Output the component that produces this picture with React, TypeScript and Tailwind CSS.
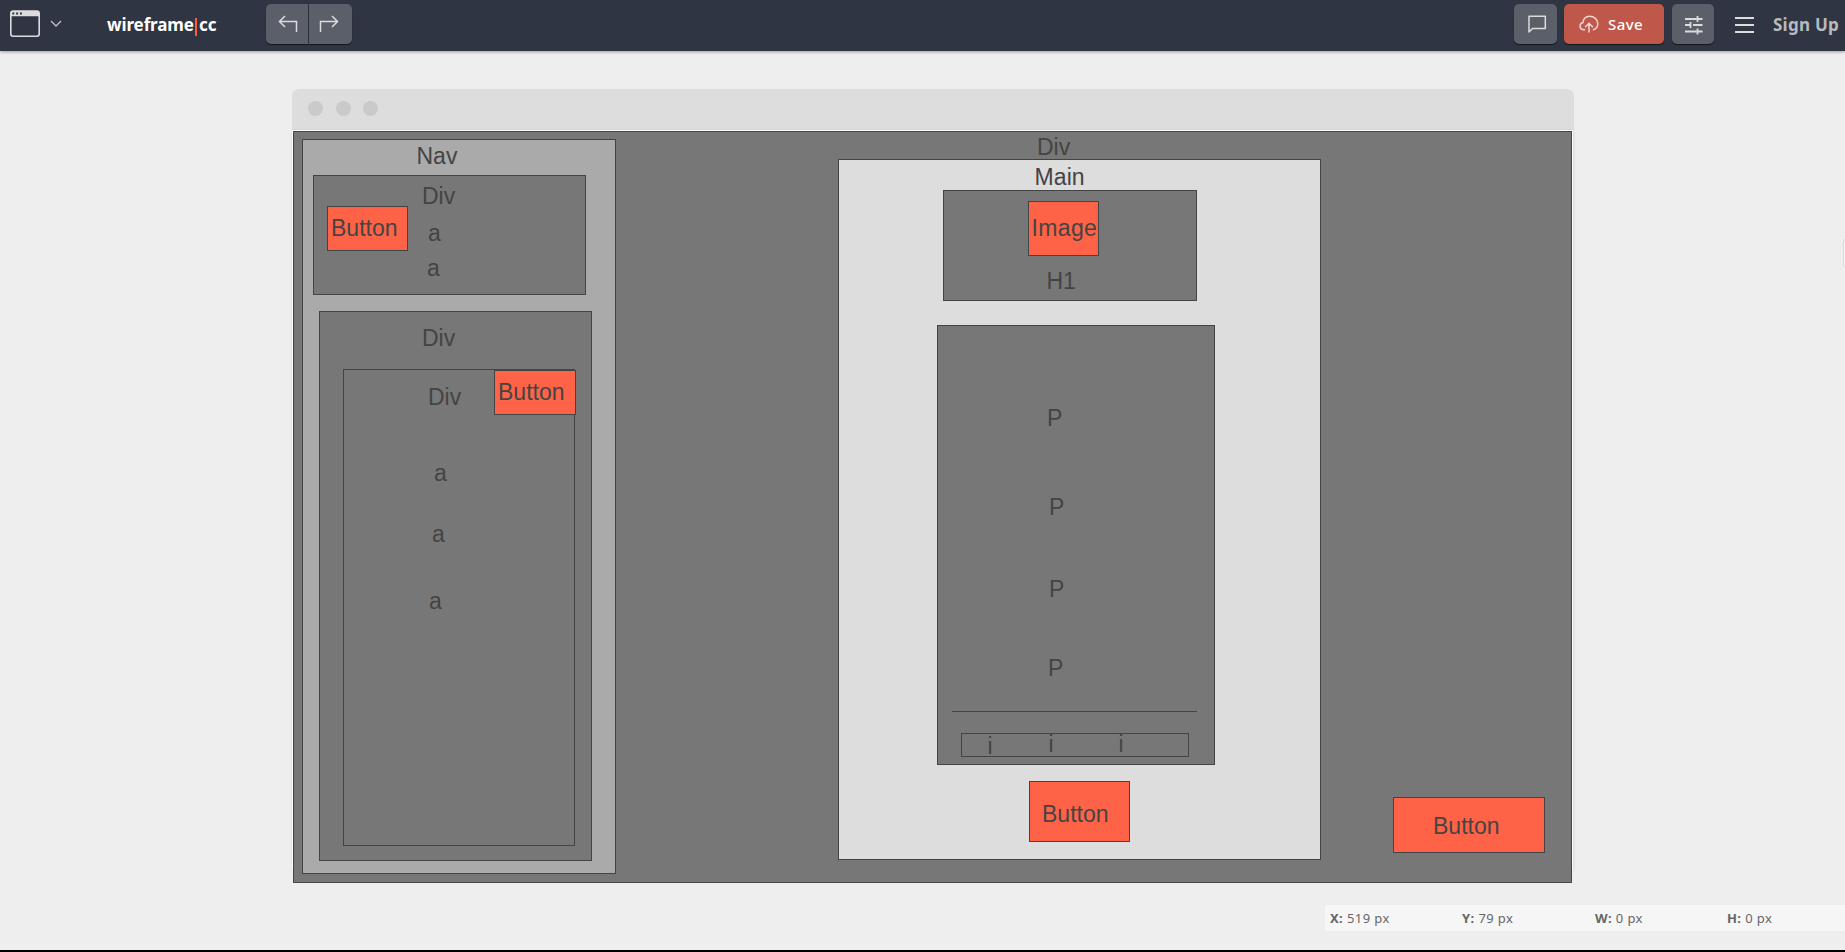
import React from "react";

const boxes: string[] = [
  "left-[1px] top-[1px] w-[1279px] h-[752px] border bg-[#777777]",
  "left-[10px] top-[9px] w-[314px] h-[735px] border bg-[#aaaaaa]",
  "left-[21px] top-[45px] w-[273px] h-[120px] border bg-[#777777]",
  "left-[35px] top-[76px] w-[81px] h-[45px] border bg-[#ff6347]",
  "left-[27px] top-[181px] w-[273px] h-[550px] border bg-[#777777]",
  "left-[51px] top-[239px] w-[232px] h-[477px] border bg-[#777777]",
  "left-[202px] top-[240px] w-[82px] h-[45px] border bg-[#ff6347]",
  "left-[546px] top-[29px] w-[483px] h-[701px] border bg-[#dddddd]",
  "left-[651px] top-[60px] w-[254px] h-[111px] border bg-[#777777]",
  "left-[736px] top-[71px] w-[71px] h-[55px] border bg-[#ff6347]",
  "left-[645px] top-[195px] w-[278px] h-[440px] border bg-[#777777]",
  "left-[660px] top-[581px] w-[245px] border-t",
  "left-[669px] top-[603px] w-[228px] h-[24px] border",
  "left-[737px] top-[651px] w-[101px] h-[61px] border bg-[#ff6347]",
  "left-[1101px] top-[667px] w-[152px] h-[56px] border bg-[#ff6347]",
];

const labels: { text: string; at: string }[] = [
  { text: "Nav", at: "left-[124.500px] top-[15px]" },
  { text: "Div", at: "left-[130px] top-[55px]" },
  { text: "Button", at: "left-[39px] top-[87px]" },
  { text: "a", at: "left-[136px] top-[92px]" },
  { text: "a", at: "left-[135px] top-[127px]" },
  { text: "Div", at: "left-[130px] top-[197px]" },
  { text: "Div", at: "left-[136px] top-[256px]" },
  { text: "Button", at: "left-[206px] top-[251px]" },
  { text: "a", at: "left-[142px] top-[332px]" },
  { text: "a", at: "left-[140px] top-[393px]" },
  { text: "a", at: "left-[137px] top-[460px]" },
  { text: "Div", at: "left-[745px] top-[6px]" },
  { text: "Main", at: "left-[742.500px] top-[36px] tracking-[0.1px]" },
  { text: "Image", at: "left-[739.500px] top-[87px] tracking-[0.350px]" },
  { text: "H1", at: "left-[754.500px] top-[140px]" },
  { text: "P", at: "left-[755px] top-[277px]" },
  { text: "P", at: "left-[757px] top-[366px]" },
  { text: "P", at: "left-[757px] top-[448px]" },
  { text: "P", at: "left-[756px] top-[527px]" },
  { text: "i", at: "left-[695.500px] top-[605px]" },
  { text: "i", at: "left-[756.500px] top-[603px]" },
  { text: "i", at: "left-[826.500px] top-[603px]" },
  { text: "Button", at: "left-[750px] top-[673px]" },
  { text: "Button", at: "left-[1141px] top-[685px]" },
];

const readings = [
  ["X:", "519 px"],
  ["Y:", "79 px"],
  ["W:", "0 px"],
  ["H:", "0 px"],
];

const toolButton =
  "flex h-10 items-center justify-center bg-[#5b5f69] text-[#dcdcdc] shadow-[0_1px_1px_#14161b]";

function WindowIcon() {
  return (
    <svg width="30" height="28" viewBox="0 0 30 28" fill="none">
      <rect x="0.8" y="1" width="28.4" height="25.3" rx="2.5" stroke="#dcdcde" strokeWidth="1.6" />
      <path d="M0.800 6.200V3.200Q0.800 1 3.200 1H26.800Q29.200 1 29.200 3.200V6.200Z" fill="#dcdcde" />
      <path d="M2.300 3.500h2M6.100 3.500h2M9.900 3.500h2" stroke="#2f3542" strokeWidth="2" />
    </svg>
  );
}

function Header() {
  return (
    <header className="relative z-10 flex h-[51px] shrink-0 items-start bg-[#2f3542] shadow-[0_1px_3px_rgba(0,0,0,0.350)]">
      <div className="ml-[10px] mt-[10px] flex items-center">
        <WindowIcon />
        <svg className="ml-[10px]" width="12" height="8" viewBox="0 0 12 8" fill="none" stroke="#c4c5c8" strokeWidth="1.3">
          <path d="M1 1l5 5 5-5" />
        </svg>
      </div>
      <div className="ml-[45px] mt-[13px] flex h-6 w-[114px] items-center whitespace-nowrap text-[17px] font-bold leading-6 text-white">
        <span className="w-[88px] shrink-0 tracking-[-0.100px]">wireframe</span>
        <span className="mr-[2px] mt-[3px] h-[18px] w-[2px] shrink-0 bg-[#ff5a3c]" />
        <span>cc</span>
      </div>
      <div className="ml-[45px] mt-1 flex gap-px">
        <button className={toolButton + " w-[42px] rounded-l-[5px] pl-[2px]"}>
          <svg width="20" height="18" viewBox="0 0 20 18" fill="none" stroke="currentColor" strokeWidth="1.5">
            <path d="M18.500 17V6.500H1.500M7 1L1.500 6.500 7 12" />
          </svg>
        </button>
        <button className={toolButton + " w-[43px] rounded-r-[5px] pr-[3px]"}>
          <svg width="20" height="18" viewBox="0 0 20 18" fill="none" stroke="currentColor" strokeWidth="1.5">
            <path d="M1.500 17V6.500h17M13 1l5.500 5.500L13 12" />
          </svg>
        </button>
      </div>
      <div className="ml-auto mt-1 flex items-center">
        <button className={toolButton + " w-[43px] rounded-[5px] pl-[2px]"}>
          <svg width="20" height="18" viewBox="0 0 20 18" fill="none" stroke="currentColor" strokeWidth="1.5">
            <path d="M2 1.200h16.300v12.300H5.500L2 17z" strokeLinejoin="round" />
          </svg>
        </button>
        <button className="ml-[7px] flex h-10 w-[100px] items-center rounded-[5px] bg-[#bf584a] pl-[15px] text-white shadow-[0_1px_1px_#14161b]">
          <svg width="20" height="18" viewBox="0 0 20 18" fill="none" stroke="#eed6d2" strokeWidth="1.5" strokeLinecap="round">
            <path d="M5.500 14.800C2.800 14.800 1 13.200 1 11c0-2 1.300-3.300 3.100-3.600C4.100 4 6.700 1.200 10.500 1.200c4.500 0 8.300 3.300 8.300 7.500 0 2.600-1.700 5-4.300 6.100M10 17V8.500M6.500 11.800L10 8.300l3.500 3.500" />
          </svg>
          <span className="ml-[9px] text-[15px] font-medium leading-5 tracking-[0.400px]">Save</span>
        </button>
        <button className={toolButton + " ml-2 w-[42px] rounded-[5px] pl-[2px] pt-px"}>
          <svg width="18" height="20" viewBox="0 0 18 20" fill="none" stroke="currentColor" strokeWidth="1.8">
            <path d="M0 4h11.500M12.500 1v6M12.500 4H17.500M0 10h5M5.500 7v6M8 10h9.500M0 16.500h11.500M12.500 13.500v6M12.500 16.500H17.500" />
          </svg>
        </button>
        <div className="ml-[21px] mt-px flex w-[19px] flex-col gap-[5px]">
          <span className="h-[2px] bg-[#dcdcde]" />
          <span className="h-[2px] bg-[#dcdcde]" />
          <span className="h-[2px] bg-[#dcdcde]" />
        </div>
        <span className="ml-[19px] mt-px w-[72px] whitespace-nowrap text-[17px] font-bold leading-6 tracking-[0.250px] text-[#b9babd]">Sign Up</span>
      </div>
    </header>
  );
}

export default function App() {
  return (
    <div className="relative flex h-[952px] w-[1845px] flex-col overflow-hidden border-b-2 border-black bg-[#eeeeee] font-['Noto_Sans',sans-serif]">
      <Header />
      <main className="ml-[292px] mt-[38px] w-[1282px]">
        <div className="flex h-[41px] items-center rounded-t-[7px] bg-[#dddddd] pl-4">
          <span className="-mt-[2px] size-[15px] rounded-full bg-[#cacaca]" />
          <span className="-mt-[2px] ml-[13px] size-[15px] rounded-full bg-[#cacaca]" />
          <span className="-mt-[2px] ml-[12px] size-[15px] rounded-full bg-[#cacaca]" />
        </div>
        <div className="relative h-[740px] border-r border-[#e0e0e0] bg-white font-['Liberation_Sans',sans-serif] shadow-[0_0_2px_rgba(0,0,0,0.100)]">
          {boxes.map((box) => (
            <div key={box} className={"absolute border-[#444444] " + box} />
          ))}
          {labels.map((label) => (
            <span key={label.at} className={"absolute whitespace-nowrap text-[23px] leading-[23px] text-[#444444] " + label.at}>
              {label.text}
            </span>
          ))}
        </div>
      </main>
      <footer className="ml-auto mt-[35px] grid h-[26px] w-[520px] shrink-0 grid-cols-[132px_133px_132px_1fr] items-center bg-[#f6f6f6] pl-[5px] pt-px text-[13px] tracking-[0.400px] text-[#666666]">
        {readings.map(([name, value]) => (
          <span key={name}>
            <b>{name}</b> {value}
          </span>
        ))}
      </footer>
      <div className="absolute -right-2 top-[239px] h-[29px] w-[10px] rounded-[3px] border border-[#dadada] bg-[#f6f6f6]" />
    </div>
  );
}
